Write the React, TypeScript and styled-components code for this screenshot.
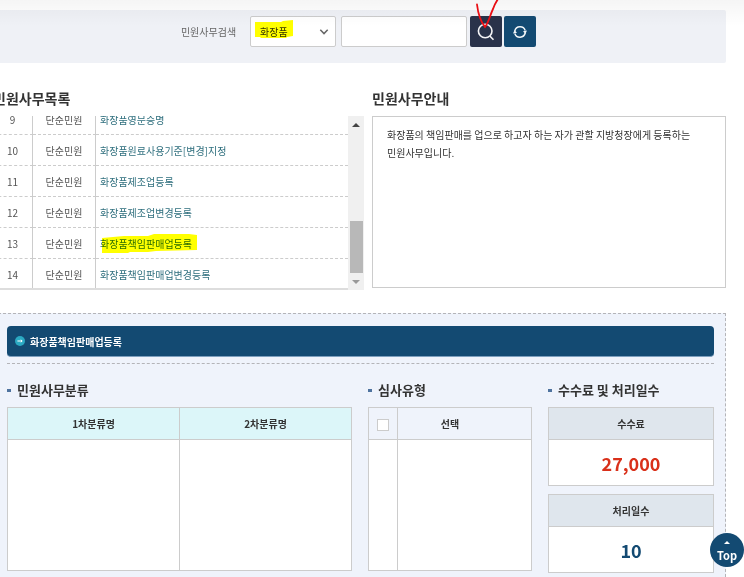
import React from "react";
import styled, { createGlobalStyle } from "styled-components";

const GlobalStyle = createGlobalStyle`
  *, *::before, *::after { box-sizing: border-box; }
  html, body { margin: 0; background: #fff; overflow-x: hidden; }
  body, button, input, select {
    font-family: "Noto Sans CJK KR", "Noto Sans", sans-serif;
    font-size: 10px;
    color: #333;
  }
  h2, h3, p { margin: 0; }
`;

const Page = styled.main`
  position: relative;
  margin-left: -7px;
  padding: 10px 18px 0 0;
`;

const TopShade = styled.div`
  position: absolute;
  inset: 0 0 auto 0;
  height: 26px;
  background: linear-gradient(rgba(0, 0, 0, 0.04), rgba(0, 0, 0, 0));
  pointer-events: none;
`;

const SearchBar = styled.form`
  display: flex;
  justify-content: center;
  height: 53px;
  padding: 6px 2px 0 0;
  background: #eff1f6;
  border-radius: 0 2px 2px 0;
`;

const SearchLabel = styled.label`
  margin-right: 14px;
  line-height: 31px;
  color: #666;
`;

const SelectWrap = styled.div`
  position: relative;
  width: 86px;
  height: 31px;
  margin-right: 5px;
`;

const Select = styled.select`
  appearance: none;
  width: 100%;
  height: 100%;
  padding: 0 24px 0 9px;
  background: #fff;
  border: 1px solid #ccc;
  border-radius: 2px;
`;

const Chevron = styled.svg`
  position: absolute;
  top: 12px;
  right: 7px;
  pointer-events: none;
`;

const Marker = styled.svg<{ $top: number; $left: number }>`
  position: absolute;
  top: ${(p) => p.$top}px;
  left: ${(p) => p.$left}px;
  mix-blend-mode: multiply;
  pointer-events: none;
`;

const SearchInput = styled.input`
  width: 126px;
  height: 31px;
  margin-right: 3px;
  padding: 0 8px;
  background: #fff;
  border: 1px solid #ccc;
  border-radius: 2px;
`;

const IconButton = styled.button<{ $color: string }>`
  position: relative;
  display: flex;
  align-items: center;
  justify-content: center;
  width: 32px;
  height: 31px;
  margin-right: 2px;
  padding: 0;
  border: 0;
  border-radius: 2px;
  background: ${(p) => p.$color};
  &:last-child { margin-right: 0; }
`;

const PenStroke = styled.svg`
  position: absolute;
  top: -16px;
  left: 0;
  overflow: visible;
  pointer-events: none;
`;

const Columns = styled.div`
  display: grid;
  grid-template-columns: 371fr 354fr;
  column-gap: 8px;
  margin-top: 25px;
`;

const Title = styled.h2`
  margin-bottom: 8px;
  font-size: 14px;
  font-weight: 700;
  line-height: 20px;
  color: #333;
`;

const ListFrame = styled.div`
  display: flex;
  height: 174px;
`;

const ListView = styled.div`
  flex: 1;
  display: flex;
  flex-direction: column;
  justify-content: flex-end;
  overflow: hidden;
  border-bottom: 2px solid #ddd;
`;

const ListTable = styled.table`
  width: 100%;
  flex-shrink: 0;
  border-collapse: separate;
  border-spacing: 0;
  table-layout: fixed;
`;

const ListCell = styled.td<{ $width?: number; $left?: boolean }>`
  width: ${(p) => (p.$width ? `${p.$width}px` : "auto")};
  height: 31px;
  padding: 2px 0 0 ${(p) => (p.$left ? 4 : 0)}px;
  text-align: ${(p) => (p.$left ? "left" : "center")};
  line-height: 16px;
  color: #555;
  border-bottom: 1px dashed #ccc;
  border-right: ${(p) => (p.$left ? "0" : "1px solid #ccc")};
  tr:last-child > & {
    height: 29px;
    border-bottom: 0;
  }
`;

const ListLink = styled.a`
  position: relative;
  color: #2f6f7e;
  text-decoration: none;
`;

const ScrollBar = styled.div`
  display: flex;
  flex-direction: column;
  align-items: center;
  width: 16px;
  background: #f0f0f0;
`;

const ScrollButton = styled.button`
  display: flex;
  align-items: center;
  justify-content: center;
  width: 16px;
  height: 17px;
  padding: 0;
  border: 0;
  background: none;
`;

const ScrollTrack = styled.div`
  flex: 1;
  display: flex;
  align-items: flex-end;
`;

const ScrollThumb = styled.div`
  width: 13px;
  height: 52px;
  background: #b8b8b8;
`;

const InfoBox = styled.div`
  height: 172px;
  padding: 9px 14px;
  line-height: 18px;
  word-break: keep-all;
  border: 1px solid #ccc;
`;

const Detail = styled.section`
  margin-top: 23px;
  padding: 12px 11px 4px 13px;
  background: #eff3fb;
  border: 1px dashed #b4b4b8;
  border-bottom: 0;
`;

const DetailBar = styled.div`
  display: flex;
  align-items: center;
  gap: 5px;
  height: 31px;
  padding-left: 8px;
  font-weight: 700;
  color: #fff;
  background: #134a72;
  border-bottom: 1px solid #7d9fbe;
  border-radius: 4px;
`;

const DetailGrid = styled.div`
  display: grid;
  grid-template-columns: 345fr 164fr 166fr;
  column-gap: 16px;
  margin-top: 6px;
  padding-top: 16px;
  border-top: 1px dashed #b4b4b8;
`;

const SubTitle = styled.h3`
  display: flex;
  align-items: center;
  gap: 6px;
  margin-bottom: 7px;
  font-size: 13px;
  font-weight: 700;
  line-height: 20px;
  color: #333;
  &::before {
    content: "";
    width: 4px;
    height: 3px;
    background: #4f739f;
  }
`;

const GridTable = styled.table`
  width: 100%;
  height: 164px;
  border-collapse: collapse;
  table-layout: fixed;
`;

const HeadCell = styled.th<{ $color: string; $width?: number; $inset?: number }>`
  width: ${(p) => (p.$width ? `${p.$width}px` : "auto")};
  height: 32px;
  padding: 0 ${(p) => p.$inset ?? 0}px 0 0;
  font-weight: 700;
  line-height: 16px;
  background: ${(p) => p.$color};
  border: 1px solid #ccc;
`;

const BodyCell = styled.td`
  background: #fff;
  border: 1px solid #ccc;
`;

const CheckAll = styled.input`
  appearance: none;
  display: block;
  width: 12px;
  height: 12px;
  margin: 2px auto 0;
  background: #fff;
  border: 1px solid #ccc;
`;

const StatCard = styled.dl`
  margin: 0 0 8px;
  text-align: center;
  border: 1px solid #ccc;
  &:last-child { margin-bottom: 0; }
`;

const StatName = styled.dt`
  font-weight: 700;
  line-height: 31px;
  background: #dfe6ed;
  border-bottom: 1px solid #ccc;
`;

const StatValue = styled.dd<{ $color: string }>`
  margin: 0;
  height: 45px;
  font-size: 18px;
  font-weight: 700;
  line-height: 46px;
  color: ${(p) => p.$color};
  background: #fff;
`;

const TopLink = styled.a`
  position: fixed;
  right: 0;
  bottom: 10px;
  display: flex;
  flex-direction: column;
  align-items: center;
  width: 34px;
  height: 34px;
  padding-top: 8px;
  font-size: 11px;
  font-weight: 700;
  line-height: 16px;
  gap: 3px;
  color: #fff;
  text-decoration: none;
  background: #134a72;
  border-radius: 50%;
`;

const items: [number, string][] = [
  [9, "화장품영문증명"],
  [10, "화장품원료사용기준[변경]지정"],
  [11, "화장품제조업등록"],
  [12, "화장품제조업변경등록"],
  [13, "화장품책임판매업등록"],
  [14, "화장품책임판매업변경등록"],
];

export default function App() {
  return (
    <>
      <GlobalStyle />
      <Page>
        <SearchBar onSubmit={(e) => e.preventDefault()}>
          <SearchLabel htmlFor="keyword">민원사무검색</SearchLabel>
          <SelectWrap>
            <Select aria-label="검색 분류" defaultValue="화장품">
              <option>화장품</option>
            </Select>
            <Chevron width="10" height="8" viewBox="0 0 10 8" fill="none" stroke="#666" strokeWidth="1.5">
              <path d="M1.3 1.8 5 5.6 8.7 1.8" />
            </Chevron>
            <Marker $top={4} $left={5} width="39" height="19" viewBox="0 0 39 19">
              <path d="M0 2H26L28 1 38 0V16L32 17 31 18H6L5 17H0Z" fill="#ff0" />
            </Marker>
          </SelectWrap>
          <SearchInput id="keyword" type="text" />
          <IconButton $color="#29324a" type="submit" aria-label="검색">
            <svg width="18" height="18" viewBox="0 0 18 18" fill="none" stroke="#f4f4f6" strokeWidth="1.6">
              <circle cx="8.2" cy="8" r="6.8" />
              <path d="M12.8 13 16.5 16.8" />
            </svg>
            <PenStroke width="32" height="30" viewBox="0 0 32 30" fill="none" stroke="#f00e14" strokeWidth="1.8" strokeLinecap="round">
              <path d="M7 4.5C8 13 11 22 15 27C19 22 20 15 23 9C24 6 26 2 28 -1" />
            </PenStroke>
          </IconButton>
          <IconButton $color="#134a72" type="reset" aria-label="초기화">
            <svg width="14" height="14" viewBox="0 0 14 14" fill="none" stroke="#f2f6f8" strokeWidth="1.5">
              <path d="M1.8 6A5.4 5.4 0 0 1 12.2 5.6M12.2 8A5.4 5.4 0 0 1 1.8 8.4" />
              <path d="M10 6.2 14 5.6 12.4 9ZM4 7.8 0 8.4 1.6 5Z" fill="#f2f6f8" stroke="none" />
            </svg>
          </IconButton>
        </SearchBar>

        <Columns>
          <section>
            <Title>민원사무목록</Title>
            <ListFrame>
              <ListView>
                <ListTable>
                  <tbody>
                    {items.map(([no, name]) => (
                      <tr key={no}>
                        <ListCell $width={40}>{no}</ListCell>
                        <ListCell $width={63}>단순민원</ListCell>
                        <ListCell $left>
                          <ListLink href="#detail">
                            {name}
                            {no === 13 && (
                              <Marker $top={-2} $left={2} width="96" height="19" viewBox="0 0 96 19">
                                <path d="M0 4 22 2H46L52 0H87L95 1V16L54 17 46 18H28L26 19H0Z" fill="#ff0" />
                              </Marker>
                            )}
                          </ListLink>
                        </ListCell>
                      </tr>
                    ))}
                  </tbody>
                </ListTable>
              </ListView>
              <ScrollBar>
                <ScrollButton aria-label="위로">
                  <svg width="8" height="4" viewBox="0 0 8 4"><path d="M0 4 4 0 8 4Z" fill="#444" /></svg>
                </ScrollButton>
                <ScrollTrack><ScrollThumb /></ScrollTrack>
                <ScrollButton aria-label="아래로">
                  <svg width="8" height="4" viewBox="0 0 8 4"><path d="M0 0H8L4 4Z" fill="#999" /></svg>
                </ScrollButton>
              </ScrollBar>
            </ListFrame>
          </section>
          <section>
            <Title>민원사무안내</Title>
            <InfoBox>
              <p>화장품의 책임판매를 업으로 하고자 하는 자가 관할 지방청장에게 등록하는 민원사무입니다.</p>
            </InfoBox>
          </section>
        </Columns>

        <Detail id="detail">
          <DetailBar>
            <svg width="10" height="10" viewBox="0 0 10 10">
              <circle cx="5" cy="5" r="5" fill="#2ba9c2" />
              <path d="M2.4 5H7M5.8 3.8 7.2 5 5.8 6.2" fill="none" stroke="#fff" strokeWidth="1" />
            </svg>
            화장품책임판매업등록
          </DetailBar>
          <DetailGrid>
            <div>
              <SubTitle>민원사무분류</SubTitle>
              <GridTable>
                <thead>
                  <tr>
                    <HeadCell $color="#dcf6f9">1차분류명</HeadCell>
                    <HeadCell $color="#dcf6f9">2차분류명</HeadCell>
                  </tr>
                </thead>
                <tbody><tr><BodyCell /><BodyCell /></tr></tbody>
              </GridTable>
            </div>
            <div>
              <SubTitle>심사유형</SubTitle>
              <GridTable>
                <thead>
                  <tr>
                    <HeadCell $color="#eff3fb" $width={29}>
                      <CheckAll type="checkbox" aria-label="전체 선택" />
                    </HeadCell>
                    <HeadCell $color="#eff3fb" $inset={29}>선택</HeadCell>
                  </tr>
                </thead>
                <tbody><tr><BodyCell /><BodyCell /></tr></tbody>
              </GridTable>
            </div>
            <div>
              <SubTitle>수수료 및 처리일수</SubTitle>
              <StatCard>
                <StatName>수수료</StatName>
                <StatValue $color="#d9301a">27,000</StatValue>
              </StatCard>
              <StatCard>
                <StatName>처리일수</StatName>
                <StatValue $color="#134a72">10</StatValue>
              </StatCard>
            </div>
          </DetailGrid>
        </Detail>
        <TopShade />
      </Page>
      <TopLink href="#">
        <svg width="6" height="3" viewBox="0 0 6 3"><path d="M0 3 3 0 6 3Z" fill="#fff" /></svg>
        Top
      </TopLink>
    </>
  );
}
